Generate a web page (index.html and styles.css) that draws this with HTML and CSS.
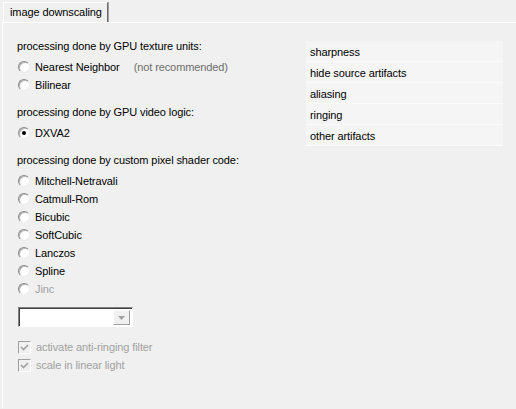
FILE: index.html
```html
<!DOCTYPE html>
<html lang="en">
<head>
  <meta charset="UTF-8" />
  <title>image downscaling</title>
  <link rel="stylesheet" href="styles.css">
</head>
<body>
  <div class="tabs">
    <div class="tab">image downscaling</div>
  </div>

  <div class="panel">
    <div class="options">
      <div class="group">
        <div class="caption">processing done by GPU texture units:</div>
        <label class="opt"><span class="radio"></span>Nearest Neighbor<span class="note">(not recommended)</span></label>
        <label class="opt"><span class="radio"></span>Bilinear</label>
      </div>

      <div class="group">
        <div class="caption">processing done by GPU video logic:</div>
        <label class="opt"><span class="radio checked"></span>DXVA2</label>
      </div>

      <div class="group">
        <div class="caption">processing done by custom pixel shader code:</div>
        <label class="opt"><span class="radio"></span>Mitchell-Netravali</label>
        <label class="opt"><span class="radio"></span>Catmull-Rom</label>
        <label class="opt"><span class="radio"></span>Bicubic</label>
        <label class="opt"><span class="radio"></span>SoftCubic</label>
        <label class="opt"><span class="radio"></span>Lanczos</label>
        <label class="opt"><span class="radio"></span>Spline</label>
        <label class="opt disabled"><span class="radio"></span>Jinc</label>
      </div>

      <div class="combo">
        <span class="combo-text"></span>
        <span class="combo-btn">
          <svg width="7" height="4" viewBox="0 0 7 4"><path d="M0 0h7L3.5 4z" fill="#a0a0a0"/></svg>
        </span>
      </div>

      <div class="checks">
        <label class="opt disabled"><span class="check">
          <svg width="9" height="9" viewBox="0 0 9 9"><path d="M1 4l2.5 2.5L8 2" fill="none" stroke="#a0a0a0" stroke-width="1.6"/></svg>
        </span>activate anti-ringing filter</label>
        <label class="opt disabled"><span class="check">
          <svg width="9" height="9" viewBox="0 0 9 9"><path d="M1 4l2.5 2.5L8 2" fill="none" stroke="#a0a0a0" stroke-width="1.6"/></svg>
        </span>scale in linear light</label>
      </div>
    </div>

    <ul class="ratings">
      <li>sharpness</li>
      <li>hide source artifacts</li>
      <li>aliasing</li>
      <li>ringing</li>
      <li>other artifacts</li>
    </ul>
  </div>
</body>
</html>
```

FILE: styles.css
```css
body {
  margin: 0;
  background: #f0f0f0;
  font-family: 'Liberation Sans', Arial, sans-serif;
  font-size: 11px;
  letter-spacing: -0.1px;
  color: #000;
  height: 409px;
  overflow: hidden;
}

.tabs {
  display: flex;
  padding: 2px 0 0 3px;
  height: 20px;
}

.tab {
  padding: 0 5px 0 6px;
  line-height: 19px;
  border-top: 1px solid #fff;
  border-left: 1px solid #fff;
  border-right: 1px solid #6a6a6a;
  box-shadow: 1px 0 0 #a0a0a0;
}

.panel {
  display: flex;
  align-items: flex-start;
  margin-left: 2px;
  border-top: 1px solid #fff;
  border-left: 1px solid #fff;
  padding: 14px 0 0 14px;
  height: 386px;
  box-sizing: border-box;
}

.options {
  width: 289px;
}

.group {
  margin-bottom: 9px;
}

.caption {
  line-height: 18px;
  margin-bottom: 3px;
}

.opt {
  display: flex;
  align-items: center;
  height: 18px;
  padding-left: 1px;
}

.opt.disabled {
  color: #a0a0a0;
}

.note {
  margin-left: 14px;
  color: #6d6d6d;
}

/* sunken round button, dark rim on the upper left */
.radio {
  width: 12px;
  height: 12px;
  box-sizing: border-box;
  border-radius: 50%;
  border: 1px solid;
  border-color: #8a8a8a #ececec #ececec #8a8a8a;
  background: #fff;
  box-shadow: inset 1px 1px 0 #b4b4b4;
  margin-right: 5px;
  position: relative;
}

.radio.checked::after {
  content: '';
  position: absolute;
  left: 3px;
  top: 3px;
  width: 4px;
  height: 4px;
  border-radius: 50%;
  background: #000;
}

.combo {
  display: flex;
  width: 115px;
  height: 20px;
  box-sizing: border-box;
  margin: 8px 0 0 1px;
  border: 1px solid;
  border-color: #808080 #fff #fff #808080;
  background: #fff;
  box-shadow: inset 1px 1px 0 #404040;
}

.combo-text {
  flex: 1;
}

.combo-btn {
  width: 15px;
  margin: 2px 2px 1px 0;
  display: flex;
  align-items: center;
  justify-content: center;
  background: #f0f0f0;
  border: 1px solid;
  border-color: #fff #a0a0a0 #a0a0a0 #fff;
}

.checks {
  margin-top: 11px;
}

.check {
  width: 13px;
  height: 13px;
  box-sizing: border-box;
  border: 1px solid;
  border-color: #a0a0a0 #fff #fff #a0a0a0;
  background: #f0f0f0;
  display: flex;
  align-items: center;
  justify-content: center;
  margin-right: 5px;
}

.ratings {
  list-style: none;
  margin: 4px 0 0;
  padding: 0;
  width: 197px;
}

.ratings li {
  height: 21px;
  line-height: 20px;
  padding: 1px 0 0 4px;
  background: #f5f5f5;
  box-sizing: border-box;
  border-bottom: 1px solid #fbfbfb;
}
```
